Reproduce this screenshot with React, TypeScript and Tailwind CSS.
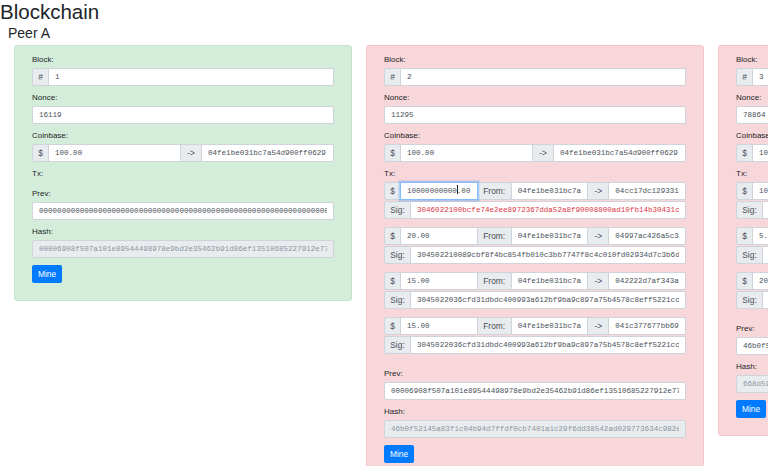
import React from "react";

type Tx = { amount: string; from: string; to: string; sig: string; bad?: boolean; focused?: boolean };
type Block = {
  n: string;
  nonce: string;
  coinbase: string;
  coinbaseTo: string;
  txs: Tx[];
  prev: string;
  hash: string;
  ok: boolean;
};

const KEY_A = "04fe1be031bc7a54d900ff0629";
const FROM = "04fe1be031bc7a";

const blocks: Block[] = [
  {
    n: "1",
    nonce: "16119",
    coinbase: "100.00",
    coinbaseTo: KEY_A,
    txs: [],
    prev: "00000000000000000000000000000000000000000000000000000000000000000",
    hash: "00006908f507a101e89544498978e9bd2e35462b91d86ef13510685227912e77",
    ok: true,
  },
  {
    n: "2",
    nonce: "11295",
    coinbase: "100.00",
    coinbaseTo: KEY_A,
    txs: [
      {
        amount: "10000000000.00",
        from: FROM,
        to: "04cc17dc1293315b8e0f7a2c4d6e8f01",
        sig: "3046022100bcfe74e2ee8972367dda52a8f90008800ad10fb14b30431c9e2d",
        bad: true,
        focused: true,
      },
      {
        amount: "20.00",
        from: FROM,
        to: "04997ac426a5c3e19d0b27f4a6c8e012",
        sig: "304502210089cbf8f4bc854fb010c3bb7747f8c4c010fd02934d7c3b6d8a1f",
      },
      {
        amount: "15.00",
        from: FROM,
        to: "042222d7af343a6b1e9c0d8f7a5b3c21",
        sig: "3045022036cfd31dbdc400993a612bf9ba9c897a75b4578c8eff5221cc0e4b",
      },
      {
        amount: "15.00",
        from: FROM,
        to: "041c377677bb69a2d4f6e8c0b1a3d5f7",
        sig: "3045022036cfd31dbdc400993a612bf9ba9c897a75b4578c8eff5221cc0e4b",
      },
    ],
    prev: "00006908f507a101e89544498978e9bd2e35462b91d86ef13510685227912e77",
    hash: "46b0f52145a83f1c04b94d7ffdf0cb7401a1c29f6dd38542ad029773634c982e",
    ok: false,
  },
  {
    n: "3",
    nonce: "78864",
    coinbase: "100.00",
    coinbaseTo: KEY_A,
    txs: [
      { amount: "10.00", from: FROM, to: "04cc17dc1293315b8e0f7a2c4d6e8f01", sig: "3045022100a1b2c3d4e5f60718293a4b5c6d7e8f90a1b2c3d4e5f607182939" },
      { amount: "5.00", from: FROM, to: "04997ac426a5c3e19d0b27f4a6c8e012", sig: "304402207f6e5d4c3b2a190817263544536271809a8b7c6d5e4f30211203" },
      { amount: "20.00", from: FROM, to: "042222d7af343a6b1e9c0d8f7a5b3c21", sig: "3045022100c0ffee1234567890abcdef0123456789abcdef0123456789abcd" },
    ],
    prev: "46b0f52145a83f1c04b94d7ffdf0cb7401a1c29f6dd38542ad029773634c982e",
    hash: "668d59c3a0e7b41f2d86e0195fa7c3b28d41e6f0a9b5c7d3e2f1a0b9c8d7e6f5",
    ok: false,
  },
];

const mono = "font-['Liberation_Mono',monospace] text-[7.55px]";

function Addon({ children, w, first, last }: { children: React.ReactNode; w: string; first?: boolean; last?: boolean }) {
  return (
    <div
      className={`flex shrink-0 items-center justify-center border border-[#ced4da] bg-[#e9ecef] text-[8.4px] text-[#495057] ${w} ${first ? "rounded-l-[2px]" : "-ml-px"} ${last ? "rounded-r-[2px]" : ""}`}
    >
      {children}
    </div>
  );
}

function Field({
  children,
  first,
  last,
  disabled,
  focused,
  red,
}: {
  children: React.ReactNode;
  first?: boolean;
  last?: boolean;
  disabled?: boolean;
  focused?: boolean;
  red?: boolean;
}) {
  return (
    <div
      className={`relative flex min-w-0 flex-1 items-center border px-[6px] ${mono} ${
        focused ? "z-10 border-[#80bdff] shadow-[0_0_0_1.5px_rgba(0,123,255,0.25)]" : "border-[#ced4da]"
      } ${disabled ? "bg-[#e9ecef] text-[#8d949b]" : "bg-white"} ${red ? "text-[#dc3545]" : disabled ? "" : "text-[#495057]"} ${
        first ? "rounded-l-[2px]" : "-ml-px"
      } ${last ? "rounded-r-[2px]" : ""}`}
    >
      <div className="min-w-0 flex-1 overflow-hidden whitespace-nowrap leading-[16px]">{children}</div>
    </div>
  );
}

function Label({ children }: { children: React.ReactNode }) {
  return <div className="mb-[3px] h-[10px] text-[8px] leading-[10px] text-[#212529]">{children}</div>;
}

function Row({ children }: { children: React.ReactNode }) {
  return <div className="flex h-[18px]">{children}</div>;
}

function Group({ children }: { children: React.ReactNode }) {
  return <div className="mb-[7px] flex flex-col">{children}</div>;
}

function TxGroup({ tx }: { tx: Tx }) {
  return (
    <div className="mb-[8px] flex flex-col gap-px">
      <Row>
        <Addon w="w-[17px]" first>$</Addon>
        <Field focused={tx.focused}>
          {tx.focused ? (
            <>
              10000000000
              <span className="-mr-px inline-block h-[9px] w-px translate-y-[1px] bg-[#222]" />
              .00
            </>
          ) : (
            tx.amount
          )}
        </Field>
        <Addon w="w-[35px]">From:</Addon>
        <Field>{tx.from}</Field>
        <Addon w="w-[22px]">-&gt;</Addon>
        <Field last>{tx.to}</Field>
      </Row>
      <Row>
        <Addon w="w-[27px]" first>Sig:</Addon>
        <Field last red={tx.bad}>{tx.sig}</Field>
      </Row>
    </div>
  );
}

function BlockCard({ b }: { b: Block }) {
  return (
    <div
      className={`flex w-[338px] shrink-0 flex-col rounded-[3px] border px-[17px] pb-[17px] pt-[9px] ${
        b.ok ? "border-[#c3e6cb] bg-[#d4edda]" : "border-[#f5c6cb] bg-[#f8d7da]"
      }`}
    >
      <Group>
        <Label>Block:</Label>
        <Row>
          <Addon w="w-[17px]" first>#</Addon>
          <Field last>{b.n}</Field>
        </Row>
      </Group>
      <Group>
        <Label>Nonce:</Label>
        <Row>
          <Field first last>{b.nonce}</Field>
        </Row>
      </Group>
      <Group>
        <Label>Coinbase:</Label>
        <Row>
          <Addon w="w-[17px]" first>$</Addon>
          <Field>{b.coinbase}</Field>
          <Addon w="w-[22px]">-&gt;</Addon>
          <Field last>{b.coinbaseTo}</Field>
        </Row>
      </Group>
      <Group>
        <Label>Tx:</Label>
        {b.txs.map((tx, i) => (
          <TxGroup key={i} tx={tx} />
        ))}
      </Group>
      <Group>
        <Label>Prev:</Label>
        <Row>
          <Field first last>{b.prev}</Field>
        </Row>
      </Group>
      <Group>
        <Label>Hash:</Label>
        <Row>
          <Field first last disabled>{b.hash}</Field>
        </Row>
      </Group>
      <button className="flex h-[18px] w-[30px] items-center justify-center self-start rounded-[2px] bg-[#007bff] text-[8.4px] text-white">
        Mine
      </button>
    </div>
  );
}

export default function App() {
  return (
    <div className="h-screen w-screen overflow-hidden bg-white font-['Liberation_Sans',Arial,sans-serif] text-[#212529]">
      <h1 className="h-[24px] text-[20.5px] leading-[24px]">Blockchain</h1>
      <h2 className="ml-[8px] h-[18px] text-[14px] leading-[18px]">Peer A</h2>
      <div className="mt-[3px] flex items-start gap-[14px] pl-[14px]">
        {blocks.map((b) => (
          <BlockCard key={b.n} b={b} />
        ))}
      </div>
    </div>
  );
}
